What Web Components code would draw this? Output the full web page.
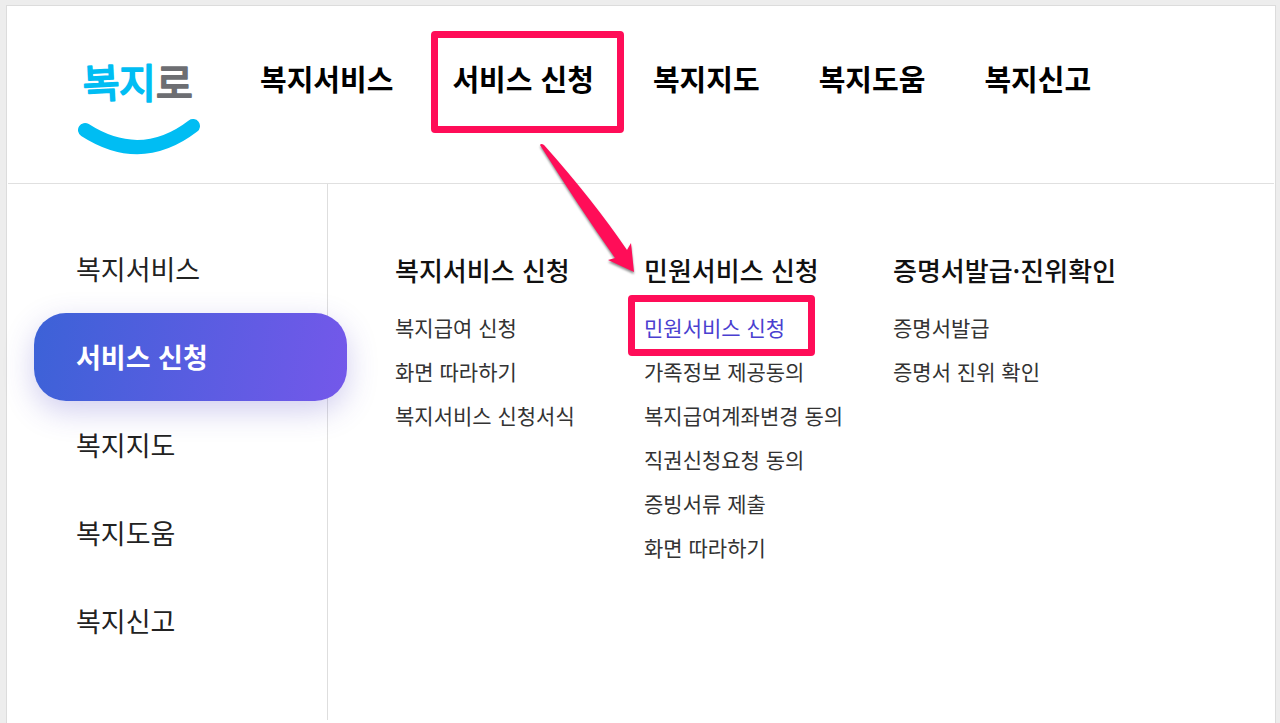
<!DOCTYPE html>
<html lang="ko">
<head>
<meta charset="utf-8">
<title>복지로</title>
<style>
  html { background: #ededed; }
  body { margin: 0; font-family: "Noto Sans CJK KR", "Noto Sans", sans-serif; color: #222; }
</style>
</head>
<body>
<welfare-page>
  <site-header slot="header">
    <nav-link>복지서비스</nav-link>
    <nav-link marked>서비스 신청</nav-link>
    <nav-link>복지지도</nav-link>
    <nav-link>복지도움</nav-link>
    <nav-link>복지신고</nav-link>
  </site-header>
  <side-menu slot="side">
    <side-link>복지서비스</side-link>
    <side-link active>서비스 신청</side-link>
    <side-link>복지지도</side-link>
    <side-link>복지도움</side-link>
    <side-link>복지신고</side-link>
  </side-menu>
  <menu-group heading="복지서비스 신청">
    <menu-link>복지급여 신청</menu-link>
    <menu-link>화면 따라하기</menu-link>
    <menu-link>복지서비스 신청서식</menu-link>
  </menu-group>
  <menu-group heading="민원서비스 신청">
    <menu-link marked>민원서비스 신청</menu-link>
    <menu-link>가족정보 제공동의</menu-link>
    <menu-link>복지급여계좌변경 동의</menu-link>
    <menu-link>직권신청요청 동의</menu-link>
    <menu-link>증빙서류 제출</menu-link>
    <menu-link>화면 따라하기</menu-link>
  </menu-group>
  <menu-group heading="증명서발급·진위확인">
    <menu-link>증명서발급</menu-link>
    <menu-link>증명서 진위 확인</menu-link>
  </menu-group>
</welfare-page>

<script>
  const define = (name, html) => customElements.define(name, class extends HTMLElement {
    constructor() {
      super();
      this.attachShadow({ mode: 'open' }).innerHTML = html;
    }
    connectedCallback() {
      const title = this.shadowRoot.querySelector('h2');
      if (title) title.textContent = this.getAttribute('heading');
    }
  });

  define('welfare-page', `
    <style>
      :host { display: flex; flex-direction: column; position: relative; box-sizing: border-box;
        min-height: calc(100vh - 5px); margin: 5px 4px 0 6px;
        border: 1px solid #dcdcdc; border-bottom: 0; background: #fff; }
      main { flex: 1; display: flex; margin-bottom: 3px; }
      section { flex: 1; display: grid; grid-template-columns: repeat(3, 249px); align-content: start; padding: 64px 0 0 67px; }
    </style>
    <slot name="header"></slot>
    <main>
      <slot name="side"></slot>
      <section><slot></slot></section>
    </main>
    <pointer-arrow></pointer-arrow>`);

  define('pointer-arrow', `
    <style>
      :host { position: absolute; left: 528px; top: 134px; pointer-events: none; }
      svg { display: block; filter: drop-shadow(0 2px 1px rgba(0,0,0,.45)); }
    </style>
    <svg width="110" height="142" viewBox="0 0 110 142" aria-hidden="true">
      <path fill="#ff0d58" d="M5 5Q6 3 9 5Q58 60 92 110L96 103L99 132L73 120L80 118Q44 67 5 5Z"/>
    </svg>`);

  define('site-header', `
    <style>
      :host { display: flex; align-items: flex-start; margin: 0 1px; height: 177px; border-bottom: 1px solid #e0e0e0; }
      a { margin: 32px 0 0 62px; width: 190px; flex: none; }
      svg { display: block; font-family: "Noto Sans CJK KR", sans-serif; }
      .ink { fill: #00bdf3; stroke: #00bdf3; stroke-width: 2; stroke-linejoin: round; }
      .grey { fill: #6d6e72; stroke: #6d6e72; }
      nav { display: flex; gap: 59px; padding-top: 50px; }
    </style>
    <a href="#" aria-label="복지로">
      <svg width="140" height="120" viewBox="0 0 140 120">
        <g class="ink" font-size="40">
          <text x="13" y="60" transform="rotate(-3 30 50)">복</text>
          <text x="49" y="60">지</text>
          <text class="grey" x="86" y="60">로</text>
        </g>
        <path d="M15 92Q71 128 123 88" fill="none" stroke="#00bdf3" stroke-width="14" stroke-linecap="round"/>
      </svg>
    </a>
    <nav aria-label="주 메뉴"><slot></slot></nav>`);

  define('nav-link', `
    <style>
      :host { display: block; position: relative; flex: none; }
      a { display: block; font-size: 29px; line-height: 44px; font-weight: 700; color: #000; text-decoration: none; white-space: nowrap; }
      :host([marked])::after { content: ""; position: absolute; inset: -25px -30px -33px -21px;
        border: 7px solid #ff0d58; border-radius: 4px; pointer-events: none; }
    </style>
    <a href="#"><slot></slot></a>`);

  define('side-menu', `
    <style>
      :host { display: block; box-sizing: border-box; flex: none; width: 321px; border-right: 1px solid #dedede; padding-top: 41px; }
    </style>
    <nav aria-label="서비스 메뉴"><slot></slot></nav>`);

  define('side-link', `
    <style>
      :host { display: block; margin: 0 -20px 0 27px; }
      a { display: block; padding-left: 42px; font-size: 27px; line-height: 88px; color: #222; text-decoration: none; border-radius: 32px; white-space: nowrap; }
      :host([active]) a { color: #fff; font-weight: 700; background: linear-gradient(100deg, #3c62d7, #7458ea);
        box-shadow: 0 10px 30px rgba(70, 60, 190, .25); position: relative; }
    </style>
    <a href="#"><slot></slot></a>`);

  define('menu-group', `
    <style>
      :host { display: block; }
      h2 { margin: 0 0 13px; font-size: 26px; line-height: 44px; font-weight: 500; color: #111; white-space: nowrap; }
    </style>
    <h2></h2>
    <div><slot></slot></div>`);

  define('menu-link', `
    <style>
      :host { display: block; }
      a { display: inline-block; position: relative; font-size: 21px; line-height: 44px; color: #333; text-decoration: none; white-space: nowrap; }
      :host([marked]) a { color: #4a3fd0; }
      :host([marked]) a::after { content: ""; position: absolute; inset: -10px -30px -7px -16px;
        border: 7px solid #ff0d58; border-radius: 4px; pointer-events: none; }
    </style>
    <a href="#"><slot></slot></a>`);
</script>
</body>
</html>
